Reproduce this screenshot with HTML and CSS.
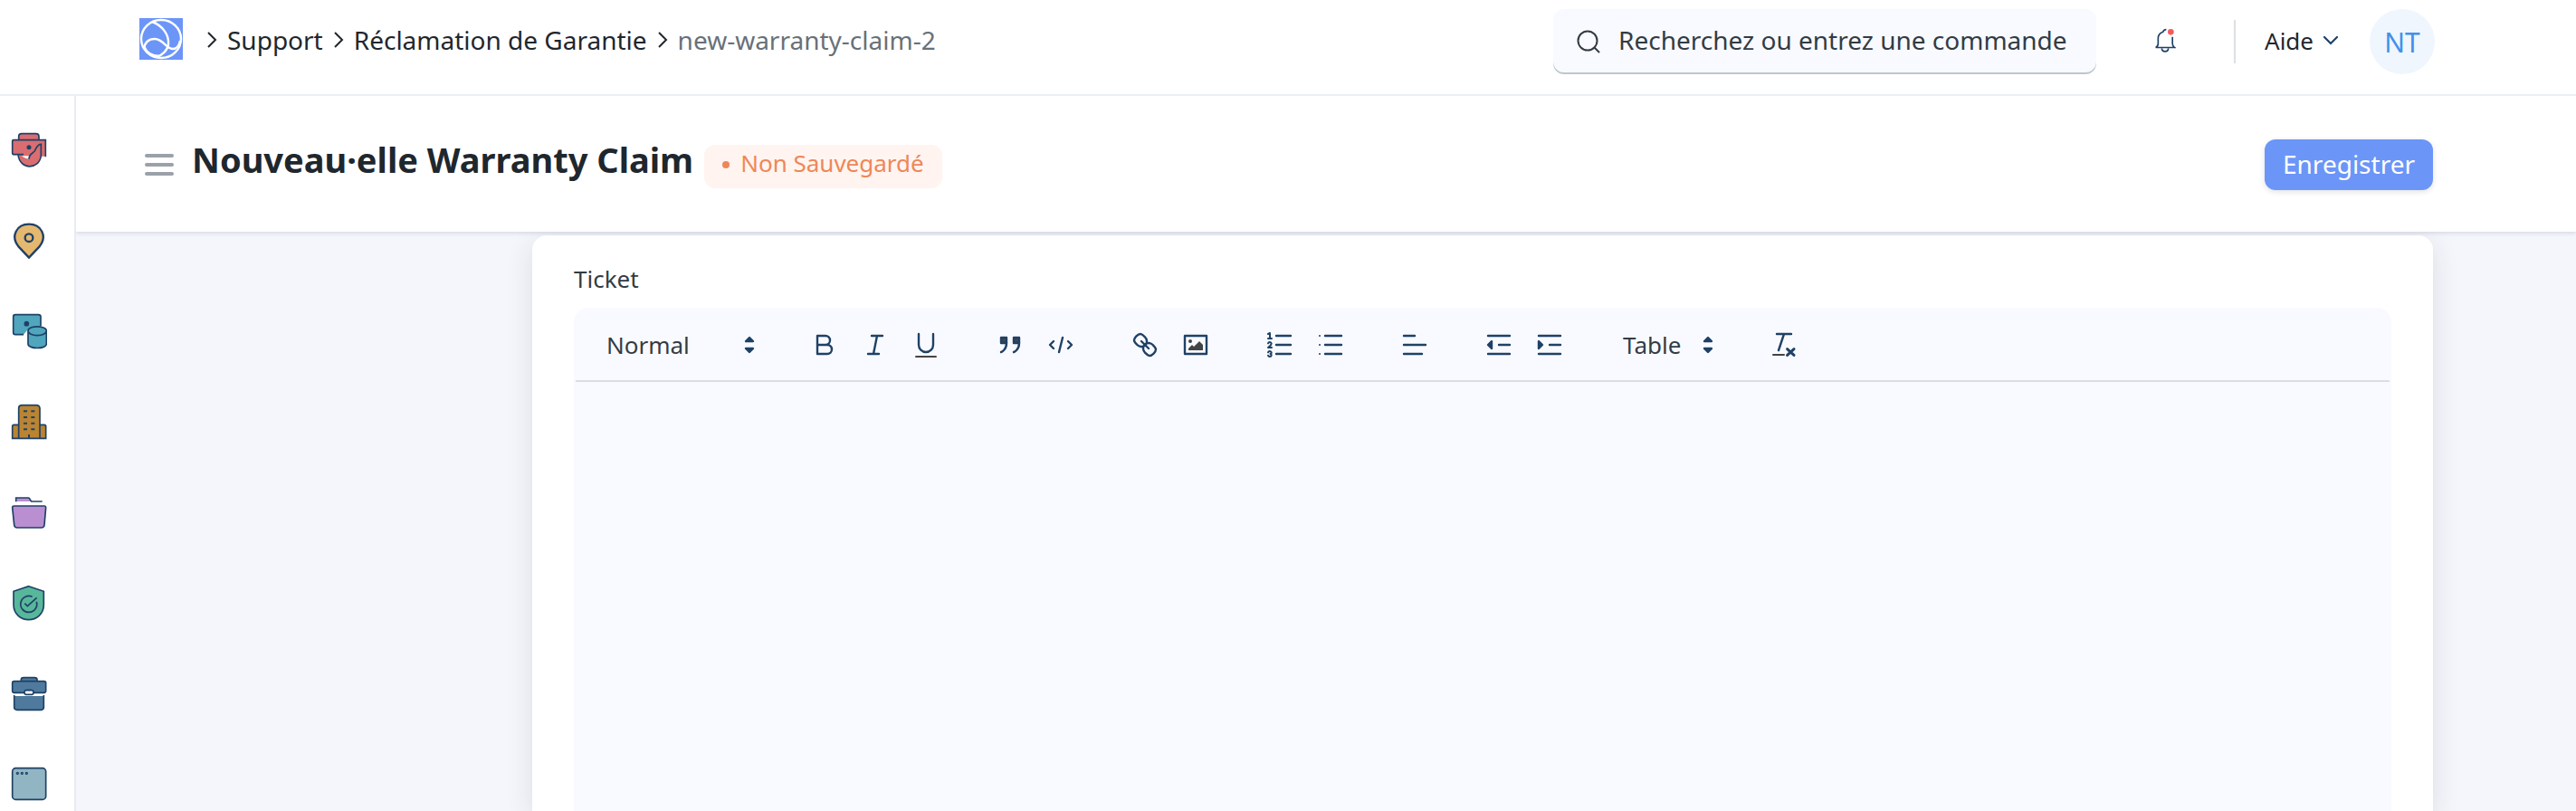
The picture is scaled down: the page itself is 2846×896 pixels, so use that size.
FILE: index.html
```html
<!DOCTYPE html>
<html lang="fr">
<head>
<meta charset="utf-8">
<meta name="viewport" content="width=device-width, initial-scale=1">
<title>Nouveau·elle Warranty Claim</title>
<link rel="stylesheet" href="styles.css">
</head>
<body>
<header class="topbar">
  <a class="logo" href="#" aria-label="Accueil">
    <svg viewBox="0 0 48 46" preserveAspectRatio="none" fill="none" stroke="#fff" stroke-width="2.4">
      <ellipse cx="24" cy="23" rx="22" ry="21"/>
      <path d="M14 4C25 8 33 18 32 29C31 36 25 41 19 43"/>
      <path d="M5 34C6 27 10 23 17 23C26 23 30 34 37 34C41 34 44 30 45 25"/>
      <path d="M5 31C8 39 14 42 22 42"/>
    </svg>
  </a>
  <nav class="crumbs" aria-label="Fil d'Ariane">
    <svg class="chevron" viewBox="0 0 12 20"><path d="M2 2l8 8-8 8"/></svg>
    <a href="#">Support</a>
    <svg class="chevron" viewBox="0 0 12 20"><path d="M2 2l8 8-8 8"/></svg>
    <a href="#">Réclamation de Garantie</a>
    <svg class="chevron" viewBox="0 0 12 20"><path d="M2 2l8 8-8 8"/></svg>
    <a class="current" href="#">new-warranty-claim-2</a>
  </nav>
  <label class="search">
    <svg viewBox="0 0 26 26" fill="none" stroke="#333c44" stroke-width="2" stroke-linecap="round"><circle cx="12" cy="12" r="10.5"/><path d="M19.500 19.500l5 5"/></svg>
    <input type="text" placeholder="Recherchez ou entrez une commande" aria-label="Recherche">
  </label>
  <button class="bell" type="button" aria-label="Notifications">
    <svg viewBox="120 96 72 84" fill="none" stroke="#1f4166" stroke-width="5">
      <path d="M160 101C152 101 151 104 149 109C138 113 133 120 133 130V148C133 154 130 158 125 160.500H187C183 158 180.500 154 180.500 148V125"/>
      <path d="M145 163C146 177 166 177 167 163"/>
      <circle cx="175" cy="109" r="10" fill="#f25c5c" stroke="none"/>
    </svg>
  </button>
  <span class="divider"></span>
  <button class="help" type="button">Aide
    <svg viewBox="0 0 18 12" fill="none" stroke="#1f4166" stroke-width="2.200" stroke-linecap="round"><path d="M2 2l7 7 7-7"/></svg>
  </button>
  <button class="avatar" type="button" aria-label="Profil NT">NT</button>
</header>

<div class="shell">
  <nav class="modules" aria-label="Modules">
    <a href="#" aria-label="Support"><svg viewBox="36 48 120 120">
      <path fill="#da6d70" stroke="none" d="M62 74V62q0-9 9-10h49q9 1 9 10v12H152v54H136C132 172 64 172 60 124H46q-5 0-5-6V74z"/>
      <path fill="#fff" stroke="none" d="M72 127h24v10q-10 0-24-10z"/>
      <path d="M78 122H47q-6 0-6-6V78q0-4 4-4H151V130M62 73V63q0-10 10-10h47q10 0 10 10V73M60 123C66 174 130 174 136 126V88C126 88 122 96 118 104C116 120 96 114 96 137"/>
      <circle cx="96" cy="98" r="5" fill="#1f4166"/></svg></a>
    <a href="#" aria-label="Carte"><svg viewBox="36 348 120 120">
      <path fill="#e5b86f" stroke-width="7" d="M96 464L62 428C33 392 56 353 96 353S159 392 130 428z"/>
      <circle cx="96" cy="398" r="13" fill="none" stroke-width="7"/></svg></a>
    <a href="#" aria-label="Données"><svg viewBox="36 648 120 120">
      <path fill="#4fa6bd" stroke="none" d="M51 653h77q7 0 7 7v38L90 705 78 719H50q-6 0-6-6V660q0-7 7-7z"/>
      <path fill="none" d="M78 719H51q-7 0-7-7V660q0-7 7-7h76q8 0 8 7V690"/>
      <circle cx="88" cy="683" r="6" fill="#1f4166"/>
      <path fill="#4fa6bd" d="M93 706V750C93 768 154 768 154 750V706C154 688 93 688 93 706C93 727 154 727 154 706"/></svg></a>
    <a href="#" aria-label="Actifs"><svg viewBox="36 138 120 120">
      <path fill="#ba8432" d="M41 253V213q0-5 5-5H62V153q0-9 9-10h51q9 1 10 10V208h15q5 0 5 5V253zM62 208V253M132 208V253"/>
      <path d="M78 163h12M103 163h12M78 183h12M103 183h12M78 203h12M103 203h12M78 223h12M103 223h12M96 240V252" stroke-width="6"/></svg></a>
    <a href="#" aria-label="Projets"><svg viewBox="36 438 120 120">
      <path fill="#b98fd2" stroke="none" d="M53 450h44l6 12H53z"/>
      <path fill="none" d="M53 463V450H94q4 0 5 5l5 7h36"/>
      <path fill="#b98fd2" d="M46 477H148q4 0 4 5L147 540q-1 9-10 9H57q-9 0-10-9L41 482q0-5 5-5z"/></svg></a>
    <a href="#" aria-label="Qualité"><svg viewBox="36 18 120 120">
      <path fill="#58b79b" d="M95 23L145 40V84C145 116 120 134 95 134S45 116 45 84V40z"/>
      <path fill="none" d="M107 58A27 27 0 1 0 121 74M82 80l9 9 31-28"/></svg></a>
    <a href="#" aria-label="Comptabilité"><svg viewBox="36 318 120 120">
      <path fill="#4f7a9d" d="M70 338v-5q0-7 8-7h37q8 0 8 7v5zM47 338h99q6 0 6 6v26q0 6-6 6H110q0-8-8-8H90q-8 0-8 8H47q-6 0-6-6V344q0-6 6-6z"/>
      <path fill="#4f7a9d" stroke="none" d="M47 387h98v37q0 9-9 9H57q-9 0-10-9z"/>
      <path fill="none" d="M47 384v40q0 9 10 9h79q9 0 9-9V384"/>
      <rect x="81" y="368" width="30" height="14" rx="6" fill="#fff"/></svg></a>
    <a href="#" aria-label="Site web"><svg viewBox="36 618 120 120">
      <rect x="41" y="626" width="111" height="104" rx="11" fill="#91b5c3"/>
      <g fill="none" stroke-width="4"><circle cx="58" cy="643" r="3"/><circle cx="73" cy="643" r="3"/><circle cx="88" cy="643" r="3"/></g></svg></a>
  </nav>

  <main class="content">
    <div class="page-head">
      <button class="menu" type="button" aria-label="Menu latéral">
        <svg viewBox="0 0 32 26" stroke="#9aa1aa" stroke-width="4" stroke-linecap="round"><path d="M2 3h28M2 13h28M2 23h28"/></svg>
      </button>
      <h1>Nouveau·elle Warranty Claim</h1>
      <span class="status">Non Sauvegardé</span>
      <button class="save" type="button">Enregistrer</button>
    </div>

    <div class="page-body">
      <section class="card">
        <label class="field-label" for="ticket">Ticket</label>
        <div class="editor">
          <div class="toolbar" role="toolbar" aria-label="Mise en forme">
            <span class="picker picker-format">
              <select aria-label="Style de texte"><option>Normal</option></select>
              <svg class="ql" viewBox="0 0 18 18"><path class="solid" d="M7 11l2 2 2-2zM7 7l2-2 2 2z"/></svg>
            </span>
            <span class="group">
              <button type="button" aria-label="Gras"><svg class="ql" viewBox="0 0 18 18"><path d="M5 4H9.500A2.500 2.500 0 0 1 9.500 9H5zM5 9h5.500A2.500 2.500 0 0 1 10.500 14H5z"/></svg></button>
              <button type="button" aria-label="Italique"><svg class="ql" viewBox="0 0 18 18"><path d="M7 4h6M5 14h6M8 14L10 4"/></svg></button>
              <button type="button" aria-label="Souligné"><svg class="ql" viewBox="0 0 18 18"><path d="M5 3V9a4 4 0 0 0 8 0V3"/><rect class="dark" x="3" y="15" width="12" height="1" rx=".5"/></svg></button>
            </span>
            <span class="group">
              <button type="button" aria-label="Citation"><svg class="ql" viewBox="0 0 18 18"><path class="mixed" d="M4 5h3v3H4zM11 5h3v3h-3z"/><path d="M7 8c0 4-3 5-3 5M14 8c0 4-3 5-3 5"/></svg></button>
              <button type="button" aria-label="Code"><svg class="ql" viewBox="0 0 18 18"><path d="M5 7L3 9l2 2M13 7l2 2-2 2M10 5L8 13"/></svg></button>
            </span>
            <span class="group">
              <button type="button" aria-label="Lien"><svg class="ql" viewBox="0 0 18 18"><path d="M7 7l4 4M8.900 4.577a3.476 3.476 0 0 1 .36 4.679A3.476 3.476 0 0 1 4.577 8.900C3.185 7.500 2.035 6.400 4.217 4.217S7.500 3.185 8.900 4.577ZM13.423 9.100a3.476 3.476 0 0 0-4.679-.36 3.476 3.476 0 0 0 .36 4.679c1.392 1.392 2.500 2.542 4.679.36S14.815 10.500 13.423 9.100Z"/></svg></button>
              <button type="button" aria-label="Image"><svg class="ql" viewBox="0 0 18 18"><rect x="3" y="4" width="12" height="10"/><circle class="dark" cx="6" cy="7" r="1"/><path class="dark" d="M5 12V11L7 9l1 1 3-3 2 2v3z"/></svg></button>
            </span>
            <span class="group">
              <button type="button" aria-label="Liste numérotée"><svg class="ql" viewBox="0 0 18 18"><path d="M7 4h8M7 9h8M7 14h8"/><path class="thin" d="M2.500 5.500h2M2.500 3l1-.5v3M4.500 10.500h-2c0-.234 1.850-1.076 1.850-2.234A.96.96 0 0 0 2.500 8.156M2.500 14.846a.96.96 0 0 0 1.850-.109A.7.7 0 0 0 3.750 14a.69.69 0 0 0 .6-.736.96.96 0 0 0-1.850-.109"/></svg></button>
              <button type="button" aria-label="Liste à puces"><svg class="ql" viewBox="0 0 18 18"><path d="M6 4h9M6 9h9M6 14h9"/><path class="thin" d="M3 4h.01M3 9h.01M3 14h.01"/></svg></button>
            </span>
            <span class="group">
              <button type="button" aria-label="Alignement"><svg class="ql" viewBox="0 0 18 18"><path d="M3 4h6M3 9h12M3 14h10"/></svg></button>
            </span>
            <span class="group">
              <button type="button" aria-label="Diminuer le retrait"><svg class="ql" viewBox="0 0 18 18"><path d="M3 4h12M9 9h6M3 14h12"/><path class="solid" d="M5 7v4L3 9z"/></svg></button>
              <button type="button" aria-label="Augmenter le retrait"><svg class="ql" viewBox="0 0 18 18"><path d="M3 4h12M9 9h6M3 14h12"/><path class="solid" d="M3 7v4l2-2z"/></svg></button>
            </span>
            <span class="picker picker-table">
              <select aria-label="Table"><option>Table</option></select>
              <svg class="ql" viewBox="0 0 18 18"><path class="solid" d="M7 11l2 2 2-2zM7 7l2-2 2 2z"/></svg>
            </span>
            <span class="group">
              <button type="button" aria-label="Effacer la mise en forme"><svg class="ql" viewBox="0 0 18 18"><path d="M5.500 3h8M6.500 12L9.500 3"/><path class="bold" d="M11.300 11.300l3.700 3.400M15 11.300l-3.700 3.400"/><rect class="dark" x="3" y="14" width="7" height="1" rx=".5"/></svg></button>
            </span>
          </div>
          <textarea id="ticket"></textarea>
        </div>
      </section>
    </div>
  </main>
</div>
</body>
</html>
```
FILE: styles.css
```css
* { box-sizing: border-box; }

body {
  margin: 0;
  height: 100vh;
  overflow: hidden;
  display: flex;
  flex-direction: column;
  background: #fff;
  color: #1f272e;
  font-family: "Noto Sans", "Open Sans", sans-serif;
  font-size: 28px;
}

a { color: inherit; text-decoration: none; }
svg { display: block; flex: none; }
button, input, select, textarea { font: inherit; color: inherit; border: 0; padding: 0; margin: 0; background: none; }

.topbar {
  display: flex;
  align-items: center;
  height: 106px;
  padding: 10px 156px 22px 154px;
  border-bottom: 2px solid #ebeff3;
}
.logo { background: #6c95f8; margin: 0 26px 6px 0; }
.logo svg { width: 48px; height: 46px; }
.crumbs { display: flex; align-items: center; gap: 11px; padding-bottom: 4px; }
.chevron { width: 12px; height: 20px; fill: none; stroke: #1f272e; stroke-width: 2; }
.current { color: #687178; }

.search {
  display: flex;
  align-items: center;
  gap: 20px;
  width: 600px;
  height: 72px;
  margin-left: auto;
  padding: 0 26px;
  border-radius: 12px;
  background: #f9faff;
  box-shadow: inset 0 -2px 0 #c0c6cc;
}
.search svg { width: 26px; height: 26px; }
.search input { flex: 1; min-width: 0; padding-bottom: 4px; outline: 0; }
.search input::placeholder { color: #333c44; opacity: 1; }

.bell { margin-left: 64px; }
.bell svg { width: 24px; height: 28px; margin-bottom: 2px; }
.divider { width: 2px; height: 48px; margin: 0 32px 0 64px; background: #dce0e3; }
.help { display: flex; align-items: center; gap: 10px; padding-bottom: 2px; font-size: 26px; }
.help svg { width: 18px; height: 12px; }
.avatar {
  width: 72px;
  height: 72px;
  margin-left: 34px;
  border-radius: 50%;
  background: #eff6fd;
  color: #4390ec;
  font-size: 30px;
}

.shell { flex: 1; min-height: 0; display: grid; grid-template-columns: 84px 1fr; }
.modules {
  display: flex;
  flex-direction: column;
  gap: 60px;
  padding: 40px 0 0 12px;
  border-right: 2px solid #e8ebf1;
}
.modules svg { width: 40px; height: 40px; fill: none; stroke: #1f4166; stroke-width: 5; }

.content { display: flex; flex-direction: column; min-width: 0; }
.page-head {
  display: flex;
  align-items: center;
  height: 150px;
  padding: 2px 158px 0 76px;
  background: #fff;
  box-shadow: 0 2px 4px rgba(50, 60, 90, .14);
  clip-path: inset(0 0 -12px 0);
  z-index: 1;
}
.menu svg { width: 32px; height: 26px; }
h1 { margin: 0 12px 0 20px; padding-bottom: 12px; font-size: 38px; line-height: 56px; font-weight: 700; }
.status {
  display: flex;
  align-items: center;
  gap: 12px;
  margin-top: 4px;
  padding: 3px 20px 11px 20px;
  border-radius: 12px;
  background: #fff4f0;
  color: #ee8757;
  font-size: 26px;
  line-height: 34px;
}
.status::before { content: ""; width: 8px; height: 8px; margin-top: 4px; border-radius: 50%; background: currentColor; }
.save {
  margin-left: auto;
  height: 56px;
  padding: 0 20px 2px;
  border-radius: 12px;
  background: #6c95f8;
  color: #fff;
  box-shadow: 0 2px 6px rgba(0, 0, 0, .12);
}

.page-body { flex: 1; min-height: 0; display: flex; padding: 4px 158px 0 504px; background: #f4f6fb; }
.card {
  flex: 1;
  display: flex;
  flex-direction: column;
  padding: 30px 46px 0;
  border-radius: 16px 16px 0 0;
  background: #fff;
  box-shadow: 0 8px 30px rgba(30, 40, 60, .12);
}
.field-label { margin-bottom: 14px; color: #333c44; font-size: 26px; line-height: 36px; }
.editor {
  flex: 1;
  display: flex;
  flex-direction: column;
  padding: 0 2px;
  border-radius: 16px 16px 0 0;
  background: #f9faff;
}
.toolbar {
  display: flex;
  align-items: center;
  gap: 37px;
  height: 82px;
  padding: 2px 18px 0;
  border-bottom: 2px solid #dcdde2;
}
.group { display: flex; }
.group button { width: 56px; height: 48px; display: grid; place-items: center; }
.picker { display: flex; align-items: center; color: #333c44; font-size: 26px; }
.picker select { flex: 1; min-width: 0; padding-left: 16px; appearance: none; outline: 0; }
.picker-format { width: 192px; }
.picker-table { width: 128px; }

.ql { width: 36px; height: 36px; fill: none; stroke: #1f4166; stroke-width: 1.2; stroke-linecap: round; stroke-linejoin: round; }
.ql .dark { fill: #444; stroke: none; }
.ql .mixed { fill: #444; }
.ql .solid { fill: #1f4166; }
.ql .thin { stroke-width: 1; }
.ql .bold { stroke-width: 1.5; }

textarea { flex: 1; width: 100%; padding: 24px 30px; resize: none; outline: 0; }
```
